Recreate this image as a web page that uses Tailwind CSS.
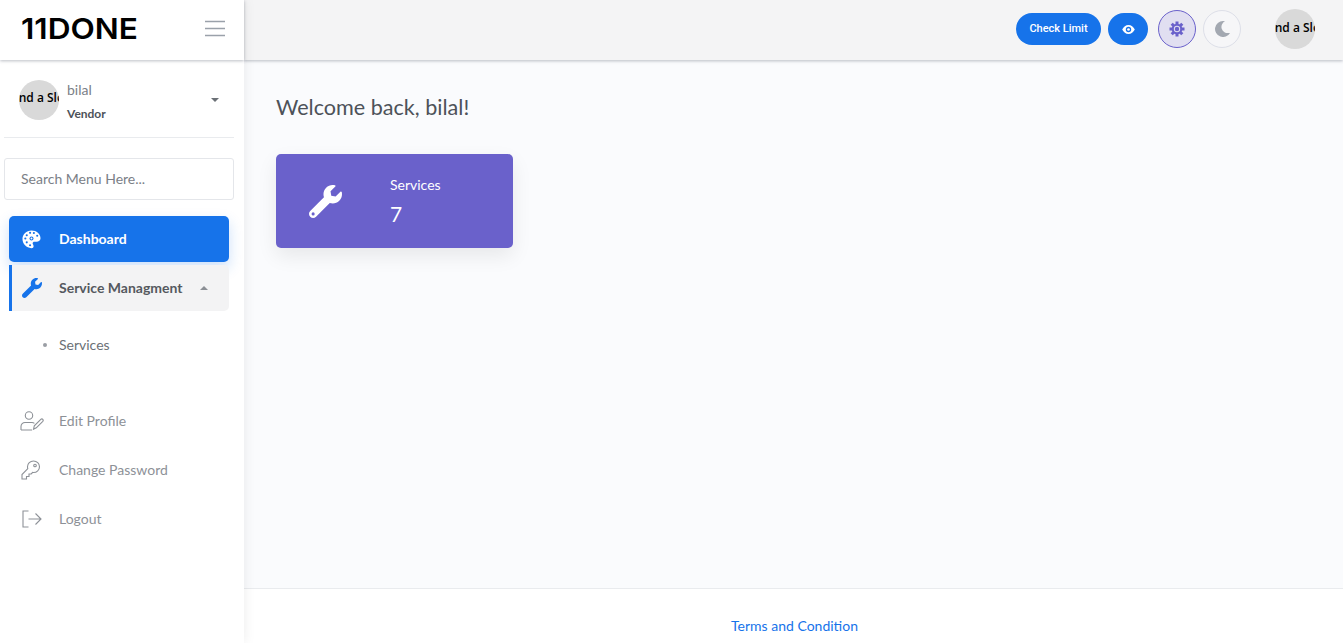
<!DOCTYPE html>
<html lang="en">
<head>
  <meta charset="UTF-8">
  <meta name="viewport" content="width=device-width, initial-scale=1.0">
  <title>Dashboard | 11DONE</title>
  <script src="https://cdn.jsdelivr.net/npm/@tailwindcss/browser@4"></script>
</head>
<body class="h-screen overflow-hidden bg-[#fafbfd] font-['Lato',sans-serif] text-[#4d5259]">
  <div class="flex h-[643px]">

    <!-- sidebar -->
    <aside class="relative z-20 w-[244px] shrink-0 bg-white shadow-[0_0_12px_rgba(0,0,0,0.08)]">
      <div class="flex h-[60px] items-center justify-between bg-white pl-[21px] pr-[19px] pb-[3px] shadow-[0_1px_3px_rgba(60,70,90,0.35)]">
        <span class="origin-left scale-x-[1.09] font-['Inter',sans-serif] text-[29px] leading-none font-semibold text-black">11DONE</span>
        <svg width="20" height="17" viewBox="0 0 20 17" fill="none" stroke="#9aa1aa" stroke-width="1.4"><path d="M0 1.5h20M0 8.5h20M0 15.5h20"/></svg>
      </div>

      <div class="ml-[4px] flex h-[78px] w-[230px] items-center border-b border-[#e9ebee] pl-[15px] pr-[15px] pt-[2px]">
        <div class="flex h-10 w-10 shrink-0 items-center justify-center overflow-hidden rounded-full bg-[#d9d9d9]">
          <span class="mb-[3px] whitespace-nowrap font-['Open_Sans',sans-serif] text-[12px] font-semibold text-black">Find a Slot</span>
        </div>
        <div class="ml-2 flex-1 pt-[3px]">
          <div class="mb-[6px] text-[14px] leading-[20px] text-[#7b8087]">bilal</div>
          <div class="text-[12px] leading-[16px] font-bold text-[#4d5259]">Vendor</div>
        </div>
        <span class="h-0 w-0 border-x-[4px] border-t-[4px] border-x-transparent border-t-[#6b7076]"></span>
      </div>

      <div class="mt-[20px] ml-[4px] flex h-[42px] w-[230px] items-center rounded-[3px] border border-[#e4e6ea] px-4 text-[14px] text-[#7b8087]"><span class="mb-[2px]">Search Menu Here...</span></div>

      <nav class="mt-[16px] ml-[9px] w-[220px] text-[14px]">
        <div class="flex h-[46px] items-center rounded-[5px] bg-[#1673ea] pl-[13px] font-bold text-white shadow-[0_6px_14px_rgba(22,115,234,0.22)]">
          <svg class="mr-[18px]" width="19" height="19" viewBox="0 0 20 20">
            <path fill="#fff" d="M10 .5C4.700.5.500 4.400.500 9.600c0 5.200 4.200 9.500 9.400 9.500 1.500 0 2.300-1 2.300-2.100 0-1.500-1-1.900-1-3 0-1 .800-1.600 1.800-1.600h2.300c2.300 0 4.200-1.400 4.200-3.600C19.500 4 15.300.5 10 .5z"/>
            <g fill="#1673ea"><circle cx="3.500" cy="9" r="1.100"/><circle cx="5" cy="5.500" r="1.100"/><circle cx="8.500" cy="3" r="1.100"/><circle cx="12.500" cy="3.200" r="1.100"/><circle cx="16" cy="6" r="1.100"/><circle cx="5" cy="13" r="1.100"/><circle cx="8.500" cy="16" r="1.100"/><circle cx="10" cy="9" r="2.100"/></g>
            <circle cx="10" cy="9" r="1" fill="#fff"/>
          </svg>
          <span class="mb-[2px]">Dashboard</span>
        </div>
        <div class="mt-[3px] flex h-[46px] items-center rounded-r-[5px] border-l-[3px] border-[#1673ea] bg-[#f3f3f4] pl-[10px] font-bold text-[#55595f]">
          <svg class="mr-[17px]" width="20" height="20" viewBox="0 0 512 512"><path fill="#1673ea" d="M507.700 109.100c-2.200-9-13.500-12.100-20.100-5.500l-74.400 74.400-67.900-11.300-11.300-67.900 74.400-74.400c6.600-6.600 3.400-17.900-5.700-20.200-47.400-11.700-99.600.9-136.600 37.900-39.600 39.600-50.600 97.100-34 147.200L18.700 402.700c-25 25-25 65.500 0 90.500s65.500 25 90.500 0l213.200-213.200c50.200 16.700 107.600 5.600 147.400-34.200 37.100-37.100 49.700-89.400 37.900-136.700z"/></svg>
          <span class="mb-[2px]">Service Managment</span>
          <span class="ml-[17px] h-0 w-0 border-x-[4px] border-b-[4px] border-x-transparent border-b-[#8b8f95]"></span>
        </div>
        <div class="mt-[22px] flex h-[24px] items-center pl-[34px] text-[#6b7076]">
          <span class="mr-[12px] h-[4px] w-[4px] rounded-full bg-[#9a9ea4]"></span><span class="mb-[2px]">Services</span>
        </div>
        <div class="mt-[52px] flex h-[24px] items-center pl-[11px] text-[#8d9197]">
          <svg class="mr-[15px]" width="24" height="20" viewBox="0 0 24 20" fill="none" stroke="#8d9197" stroke-width="1.100"><circle cx="9" cy="4.500" r="3.700"/><path d="M1 19v-3.500c0-2.200 1.800-4 4-4h7c1 0 1.800.3 2.400.8M1 19h11"/><path d="M14 18.800l.8-3.500 6.500-6.500c.6-.6 1.500-.6 2 0 .5.600.5 1.400 0 2l-6.500 6.500z" transform="translate(-.5 -.5)"/></svg>
          <span class="mb-[2px]">Edit Profile</span>
        </div>
        <div class="mt-[25px] flex h-[24px] items-center pl-[11px] text-[#8d9197]">
          <svg class="mr-[16px]" width="23" height="20" viewBox="0 0 23 20" fill="none" stroke="#8d9197" stroke-width="1.100"><path d="M13.500 1c-3.300 0-6 2.500-6 5.700 0 .7.100 1.300.3 1.900L2 14.500V19h4.500v-2.500H9V14h2.200l1.500-1.600c.3 0 .5.100.8.100 3.300 0 6-2.600 6-5.800S16.800 1 13.500 1z"/><circle cx="15" cy="5.500" r="1.300"/></svg>
          <span class="mb-[2px]">Change Password</span>
        </div>
        <div class="mt-[25px] flex h-[24px] items-center pl-[13px] text-[#8d9197]">
          <svg class="mr-[17px]" width="20" height="18" viewBox="0 0 20 18" fill="none" stroke="#8d9197" stroke-width="1.100"><path d="M6.500 1H1v16h5.500M6.500 9H19M13.500 3.500L19 9l-5.500 5.500"/></svg>
          <span class="mb-[2px]">Logout</span>
        </div>
      </nav>
    </aside>

    <div class="flex min-w-0 flex-1 flex-col">
      <!-- top bar -->
      <header class="relative z-10 flex h-[60px] shrink-0 items-center bg-[#f4f4f5] pb-[2px] pl-[772px] shadow-[0_1px_3px_rgba(60,70,90,0.35)]">
        <button class="h-[32px] w-[85px] rounded-full bg-[#1673ea] font-['Roboto',sans-serif] text-[11px] font-medium text-white">Check Limit</button>
        <button class="ml-[7px] flex h-[32px] w-[40px] items-center justify-center rounded-full bg-[#1673ea]">
          <svg width="13" height="9" viewBox="0 0 14 10"><path fill="#fff" fill-rule="evenodd" d="M7 0C4 0 1.500 2 0 5c1.500 3 4 5 7 5s5.500-2 7-5c-1.500-3-4-5-7-5zm0 8a3 3 0 110-6 3 3 0 010 6z"/><circle cx="7" cy="5" r="1.500" fill="#fff"/></svg>
        </button>
        <button class="ml-[10px] flex h-[38px] w-[38px] items-center justify-center rounded-full border border-[#6a61cb] bg-[#e1dff1]">
          <svg width="16" height="16" viewBox="0 0 16 16"><g stroke="#6a61cb" stroke-width="3"><path d="M8 .5v15M.5 8h15M2.700 2.700l10.600 10.600M13.300 2.700L2.700 13.300"/></g><circle cx="8" cy="8" r="5.300" fill="#6a61cb"/><circle cx="8" cy="8" r="3.200" fill="#e1dff1"/><circle cx="8" cy="8" r="2.200" fill="#6a61cb"/></svg>
        </button>
        <button class="ml-[7px] flex h-[38px] w-[38px] items-center justify-center rounded-full border border-[#dddfe8] bg-[#f6f6f8]">
          <svg width="16" height="16" viewBox="0 0 16 16"><path fill="#a3a8b1" d="M9 0a8 8 0 107 11.900c-.4.100-.8.100-1.200.100A6.200 6.200 0 0111 .300 8 8 0 009 0z"/></svg>
        </button>
        <div class="ml-[34px] flex h-10 w-10 items-center justify-center overflow-hidden rounded-full bg-[#d9d9d9]">
          <span class="mb-[3px] whitespace-nowrap font-['Open_Sans',sans-serif] text-[12px] font-semibold text-black">Find a Slot</span>
        </div>
      </header>

      <main class="flex-1 pl-[32px] pt-[32px]">
        <h1 class="text-[21.6px] leading-[30px] text-[#4d5259]">Welcome back, bilal!</h1>
        <div class="mt-[32px] flex h-[94px] w-[237px] items-center rounded-[5px] bg-[#6a61cb] text-white shadow-[0_8px_20px_rgba(0,0,0,0.08)]">
          <svg class="ml-[33px]" width="33" height="33" viewBox="0 0 512 512"><path fill="#fff" fill-rule="evenodd" d="M507.700 109.100c-2.200-9-13.500-12.100-20.100-5.500l-74.400 74.400-67.900-11.300-11.300-67.900 74.400-74.400c6.600-6.600 3.400-17.900-5.700-20.200-47.400-11.700-99.600.9-136.600 37.900-39.600 39.600-50.600 97.100-34 147.200L18.700 402.700c-25 25-25 65.500 0 90.500s65.500 25 90.500 0l213.200-213.200c50.200 16.700 107.600 5.600 147.400-34.200 37.100-37.100 49.700-89.400 37.900-136.700zM64 472a24 24 0 110-48 24 24 0 010 48z"/></svg>
          <div class="ml-[48px]">
            <div class="text-[14px] leading-[20px]">Services</div>
            <div class="mt-[6px] text-[21px] leading-[26px]">7</div>
          </div>
        </div>
      </main>

      <footer class="flex h-[55px] shrink-0 items-center justify-center border-t border-[#e9ebee] bg-white pt-[18px] pl-[2px] text-[14px] text-[#1673ea]">Terms and Condition</footer>
    </div>
  </div>
</body>
</html>
